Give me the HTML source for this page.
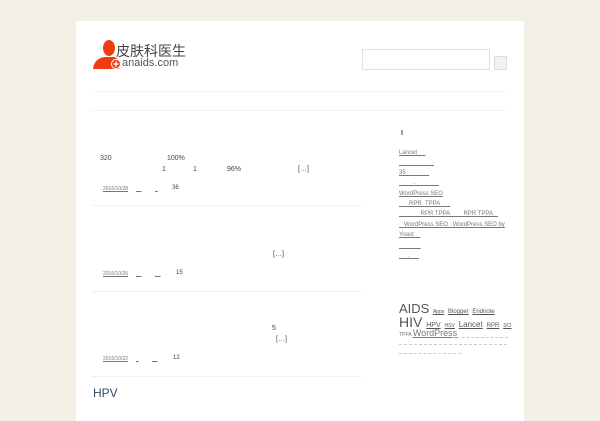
<!DOCTYPE html>
<html><head><meta charset="utf-8"><style>
body{margin:0;background:#f3f0e6;width:600px;height:400px;overflow:hidden;font-family:"Liberation Sans","Noto Sans CJK SC",sans-serif;}
.pg{position:absolute;left:76px;top:21px;width:448px;height:400px;background:#fff;}
.a{position:absolute;font-size:7px;color:#444;white-space:nowrap;}
.l{position:absolute;font-size:5px;color:#777;text-decoration:underline;white-space:nowrap;}
.s{position:absolute;font-size:6px;color:#777;text-decoration:underline;white-space:nowrap;}
.hr{position:absolute;height:1px;background:#f0f0f0;}
</style></head><body>
<div class="pg"></div>
<svg style="position:absolute;left:92px;top:38px" width="30" height="32" viewBox="0 0 30 32">
<ellipse cx="17" cy="10" rx="6" ry="8" fill="#f03c10"/>
<path d="M1 31 C2 22 8 20 12 19 L22 19 C25 20 27 22 27 24 L27 31 Z" fill="#f03c10"/>
<circle cx="24" cy="26" r="4.5" fill="#e83a12" stroke="#fff" stroke-width="1"/>
<path d="M24 23.5v5M21.5 26h5" stroke="#fff" stroke-width="1.6"/>
</svg>
<div class="a" style="left:116px;top:41px;font-size:14px;color:#444">皮肤科医生</div>
<div class="a" style="left:122px;top:57px;font-size:11px;color:#555">anaids.com</div>
<div style="position:absolute;left:362px;top:49px;width:126px;height:19px;border:1px solid #e0e0e0;background:#fff"></div>
<div style="position:absolute;left:494px;top:56px;width:11px;height:12px;border:1px solid #ddd;background:#f2f2f2"></div>
<div class="hr" style="left:92px;top:91px;width:415px;background:#f3f3f3"></div>
<div class="hr" style="left:92px;top:110px;width:415px;background:#f3f3f3"></div>
<div class="a" style="left:100px;top:155px">320</div>
<div class="a" style="left:167px;top:155px">100%</div>
<div class="a" style="left:162px;top:166px">1</div>
<div class="a" style="left:193px;top:166px">1</div>
<div class="a" style="left:227px;top:166px">96%</div>
<div class="a" style="left:298px;top:166px">[…]</div>
<div class="l" style="left:103px;top:186px">2016/10/28</div><div class="l" style="left:136px;top:186px">&nbsp;&nbsp;&nbsp;&nbsp;</div><div class="l" style="left:155px;top:186px">&nbsp;&nbsp;</div>
<div class="a" style="left:172px;top:185px;font-size:6px">36</div>
<div class="hr" style="left:92px;top:205px;width:270px"></div>
<div class="a" style="left:273px;top:251px">[…]</div>
<div class="l" style="left:103px;top:271px">2016/10/26</div><div class="l" style="left:136px;top:271px">&nbsp;&nbsp;&nbsp;&nbsp;</div><div class="l" style="left:155px;top:271px">&nbsp;&nbsp;&nbsp;&nbsp;</div>
<div class="a" style="left:176px;top:270px;font-size:6px">15</div>
<div class="hr" style="left:92px;top:291px;width:270px"></div>
<div class="a" style="left:272px;top:325px">5</div>
<div class="a" style="left:276px;top:336px">[…]</div>
<div class="l" style="left:103px;top:356px">2016/10/22</div><div class="l" style="left:136px;top:356px">&nbsp;&nbsp;</div><div class="l" style="left:152px;top:356px">&nbsp;&nbsp;&nbsp;&nbsp;</div>
<div class="a" style="left:173px;top:355px;font-size:6px">12</div>
<div class="hr" style="left:92px;top:376px;width:270px"></div>
<div class="a" style="left:93px;top:386px;font-size:12px;color:#2e4a66">HPV</div>
<div class="a" style="left:401px;top:130px;font-weight:bold">I</div>
<div class="s" style="left:399px;top:150px">Lancet&nbsp;&nbsp;&nbsp;&nbsp;&nbsp;</div>
<div class="s" style="left:399px;top:160px">&nbsp;&nbsp;&nbsp;&nbsp;&nbsp;&nbsp;&nbsp;&nbsp;&nbsp;&nbsp;&nbsp;&nbsp;&nbsp;&nbsp;&nbsp;&nbsp;&nbsp;&nbsp;&nbsp;&nbsp;&nbsp;</div>
<div class="s" style="left:399px;top:170px">35&nbsp;&nbsp;&nbsp;&nbsp;&nbsp;&nbsp;&nbsp;&nbsp;&nbsp;&nbsp;&nbsp;&nbsp;&nbsp;&nbsp;</div>
<div class="s" style="left:399px;top:180px">&nbsp;&nbsp;&nbsp;&nbsp;&nbsp;&nbsp;&nbsp;&nbsp;&nbsp;.&nbsp;&nbsp;&nbsp;&nbsp;&nbsp;&nbsp;&nbsp;&nbsp;&nbsp;&nbsp;&nbsp;&nbsp;&nbsp;&nbsp;</div>
<div class="s" style="left:399px;top:191px">WordPress SEO</div>
<div class="s" style="left:399px;top:201px">&nbsp;&nbsp;&nbsp;&nbsp;&nbsp;&nbsp;RPR&nbsp;&nbsp;TPPA&nbsp;&nbsp;&nbsp;&nbsp;&nbsp;&nbsp;</div>
<div class="s" style="left:399px;top:211px">&nbsp;&nbsp;&nbsp;&nbsp;&nbsp;&nbsp;&nbsp;&nbsp;&nbsp;&nbsp;&nbsp;&nbsp;&nbsp;RPR TPPA&nbsp;&nbsp;&nbsp;&nbsp;&nbsp;&nbsp;&nbsp;&nbsp;RPR TPPA&nbsp;&nbsp;&nbsp;</div>
<div class="s" style="left:399px;top:222px">&nbsp;&nbsp;&nbsp;WordPress SEO&nbsp;&nbsp;:WordPress SEO by</div>
<div class="s" style="left:399px;top:232px">Yoast&nbsp;&nbsp;&nbsp;&nbsp;</div>
<div class="s" style="left:399px;top:243px">&nbsp;&nbsp;&nbsp;&nbsp;&nbsp;&nbsp;&nbsp;&nbsp;&nbsp;&nbsp;&nbsp;&nbsp;&nbsp;</div>
<div class="s" style="left:399px;top:253px">&nbsp;&nbsp;&nbsp;&nbsp;&nbsp;.&nbsp;&nbsp;&nbsp;&nbsp;&nbsp;&nbsp;</div>
<div class="a" style="left:399px;top:302px;font-size:13px;color:#555;line-height:13px">AIDS <span style="font-size:5px;text-decoration:underline">Apps</span> <span style="font-size:6px;text-decoration:underline">Blogger</span> <span style="font-size:6px;text-decoration:underline">Endnote</span></div>
<div class="a" style="left:399px;top:315px;font-size:14px;color:#555;line-height:14px">HIV <span style="font-size:7px;text-decoration:underline">HPV</span> <span style="font-size:5px;text-decoration:underline">HSV</span> <span style="font-size:8px;text-decoration:underline">Lancet</span> <span style="font-size:6px;text-decoration:underline">RPR</span> <span style="font-size:5px;text-decoration:underline">SCI</span></div>
<div class="a" style="left:399px;top:328px;font-size:5px;color:#777">TPPA <span style="font-size:9px;text-decoration:underline">WordPress</span></div>
<div style="position:absolute;left:452px;top:337px;width:56px;border-top:1px dashed #ccc"></div>
<div style="position:absolute;left:399px;top:344px;width:108px;border-top:1px dashed #ccc"></div>
<div style="position:absolute;left:399px;top:353px;width:62px;border-top:1px dashed #ccc"></div>
</body></html>
